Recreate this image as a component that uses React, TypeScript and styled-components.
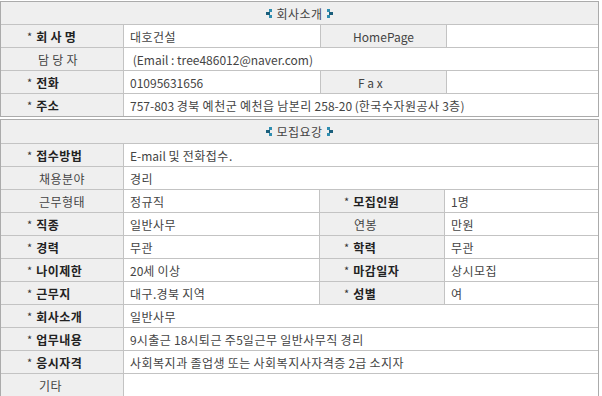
import React from "react"
import styled, { createGlobalStyle } from "styled-components"

const GlobalStyle = createGlobalStyle`
  html, body {
    margin: 0;
    padding: 0;
    background: #ffffff;
  }
  body {
    font-family: "Noto Sans CJK KR", "Liberation Sans", sans-serif;
    font-size: 12px;
    color: #444;
  }
`

const Page = styled.div`
  width: 599px;
  padding-top: 1px;
  display: flex;
  flex-direction: column;
  gap: 2px;
`

const Section = styled.div<{ $cols: string }>`
  display: grid;
  grid-template-columns: ${(p) => p.$cols};
  border: 1px solid #ababab;
  box-sizing: border-box;
  width: 599px;
`

const SectionHeader = styled.div<{ $h: number }>`
  grid-column: 1 / -1;
  height: ${(p) => p.$h}px;
  background: #efefef;
  display: flex;
  align-items: center;
  justify-content: center;
  gap: 3px;
  color: #444;
  font-size: 12px;
`

const Cell = styled.div<{ $first?: boolean; $span?: number }>`
  height: 23px;
  box-sizing: border-box;
  border-top: 1px solid #c3c3c3;
  border-left: ${(p) => (p.$first ? "none" : "1px solid #c3c3c3")};
  grid-column: ${(p) => (p.$span ? `span ${p.$span}` : "auto")};
  display: flex;
  align-items: center;
  white-space: pre;
  overflow: hidden;
`

const LabelCell = styled(Cell)<{ $bold?: boolean; $pad?: number; $center?: boolean }>`
  background: #efefef;
  justify-content: ${(p) => (p.$center ? "center" : "flex-start")};
  padding-left: ${(p) => (p.$center ? 0 : p.$pad ?? 26)}px;
  font-weight: ${(p) => (p.$bold ? 700 : 400)};
  color: ${(p) => (p.$bold ? "#222" : "#444")};
`

const ValueCell = styled(Cell)`
  background: #ffffff;
  padding-left: 6px;
  color: #444;
`

const Star = styled.span`
  font-weight: 400;
  font-size: 11px;
  margin-right: 4px;
  color: #333;
`

// hangul runs get a touch of tracking so they sit as wide as the original face
const Han = styled.span`
  letter-spacing: 0.5px;
`

const Txt = ({ children }: { children: string }) => (
  <span>
    {children.split(/([가-힣]+)/).map((part, i) =>
      /[가-힣]/.test(part) ? <Han key={i}>{part}</Han> : <React.Fragment key={i}>{part}</React.Fragment>
    )}
  </span>
)

const Arrow = ({ dir }: { dir: "left" | "right" }) => (
  <svg width="7" height="9" viewBox="0 0 7 9" style={{ transform: dir === "right" ? "scaleX(-1)" : undefined }}>
    <rect x="3" y="0" width="3" height="3" fill="#2f8db0" />
    <rect x="0" y="3" width="4" height="3" fill="#1b5f7c" />
    <rect x="3" y="6" width="3" height="3" fill="#2f8db0" />
  </svg>
)

type Lbl = { text: string; star?: boolean; center?: boolean; pad?: number }
type Row = { label: Lbl; value: string; label2?: Lbl; value2?: string }

const Label = ({ l, first }: { l: Lbl; first?: boolean }) => (
  <LabelCell $first={first} $bold={l.star} $center={l.center} $pad={l.pad ?? (l.star ? 26 : 38)}>
    {l.star && <Star>*</Star>}
    <Txt>{l.text}</Txt>
  </LabelCell>
)

const Table = ({ title, cols, headerH, rows }: { title: string; cols: string; headerH: number; rows: Row[] }) => (
  <Section $cols={cols}>
    <SectionHeader $h={headerH}>
      <Arrow dir="left" />
      <Txt>{title}</Txt>
      <Arrow dir="right" />
    </SectionHeader>
    {rows.map((r, i) => (
      <React.Fragment key={i}>
        <Label l={r.label} first />
        {r.label2 ? (
          <>
            <ValueCell>
              <Txt>{r.value}</Txt>
            </ValueCell>
            <Label l={r.label2} />
            <ValueCell>
              <Txt>{r.value2 ?? ""}</Txt>
            </ValueCell>
          </>
        ) : (
          <ValueCell $span={3}>
            <Txt>{r.value}</Txt>
          </ValueCell>
        )}
      </React.Fragment>
    ))}
  </Section>
)

const companyRows: Row[] = [
  { label: { text: "회 사 명", star: true }, value: "대호건설", label2: { text: "HomePage", center: true }, value2: "" },
  { label: { text: "담 당 자", pad: 37 }, value: " (Email : tree486012@naver.com)" },
  { label: { text: "전화", star: true }, value: "01095631656", label2: { text: "F a x", pad: 37 }, value2: "" },
  { label: { text: "주소", star: true }, value: "757-803 경북 예천군 예천읍 남본리 258-20 (한국수자원공사 3층)" },
]

const jobRows: Row[] = [
  { label: { text: "접수방법", star: true }, value: "E-mail 및 전화접수." },
  { label: { text: "채용분야" }, value: "경리" },
  { label: { text: "근무형태" }, value: "정규직", label2: { text: "모집인원", star: true, pad: 24 }, value2: "1명" },
  { label: { text: "직종", star: true }, value: "일반사무", label2: { text: "연봉", pad: 34 }, value2: "만원" },
  { label: { text: "경력", star: true }, value: "무관", label2: { text: "학력", star: true, pad: 24 }, value2: "무관" },
  { label: { text: "나이제한", star: true }, value: "20세 이상", label2: { text: "마감일자", star: true, pad: 24 }, value2: "상시모집" },
  { label: { text: "근무지", star: true }, value: "대구.경북 지역", label2: { text: "성별", star: true, pad: 24 }, value2: "여" },
  { label: { text: "회사소개", star: true }, value: "일반사무" },
  { label: { text: "업무내용", star: true }, value: "9시출근 18시퇴근 주5일근무 일반사무직 경리" },
  { label: { text: "응시자격", star: true }, value: "사회복지과 졸업생 또는 사회복지사자격증 2급 소지자" },
  { label: { text: "기타" }, value: "" },
]

export default function App() {
  return (
    <>
      <GlobalStyle />
      <Page>
        <Table title="회사소개" cols="122px 197px 126px 1fr" headerH={22} rows={companyRows} />
        <Table title="모집요강" cols="122px 196px 125px 1fr" headerH={23} rows={jobRows} />
      </Page>
    </>
  )
}
